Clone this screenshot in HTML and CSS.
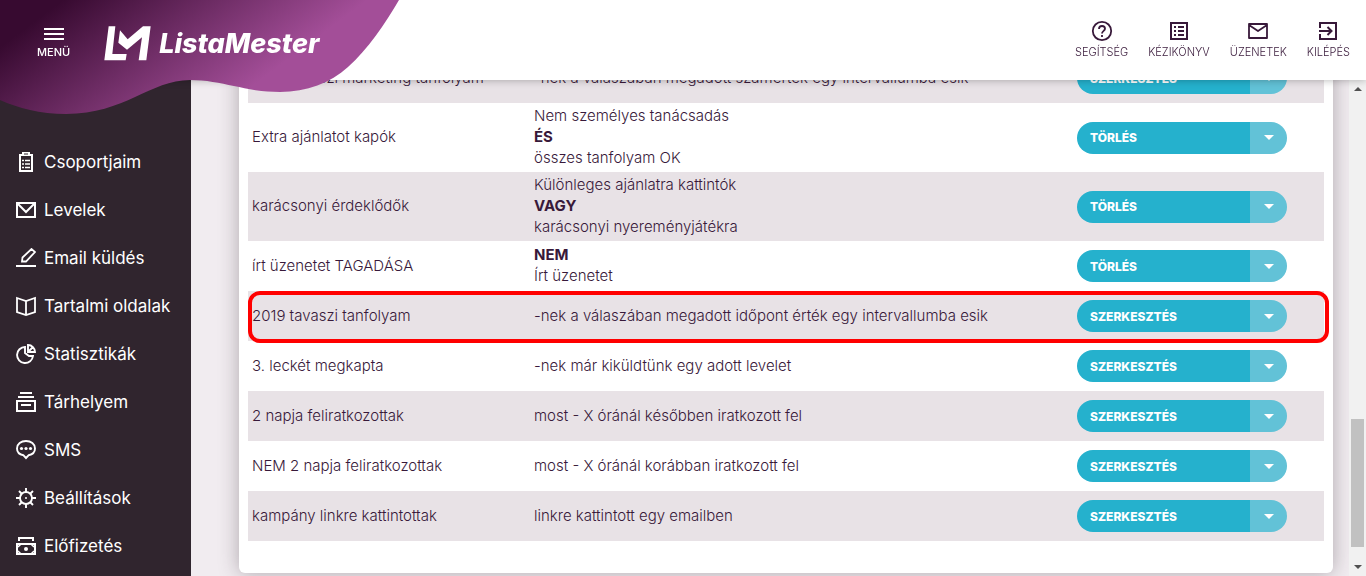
FILE: index.html
```html
<!DOCTYPE html>
<html lang="hu">
<head>
    <meta charset="UTF-8">
    <meta name="viewport" content="width=device-width, initial-scale=1.0">
    <title>ListaMester</title>
    <link rel="stylesheet" href="styles.css">
</head>
<body>
    <header class="header">
        <svg class="blob" width="400" height="115" viewBox="0 0 400 115" aria-hidden="true">
            <defs>
                <linearGradient id="blobFill" gradientUnits="userSpaceOnUse" x1="23" y1="30" x2="132" y2="176">
                    <stop offset="0" stop-color="#370a30"/>
                    <stop offset="1" stop-color="#a34e98"/>
                </linearGradient>
            </defs>
            <path fill="url(#blobFill)" d="M0 0H399C385 24 368 49 348 67C330 83 307 92 280 92C245 92 222 80 190 80C150 80 125 114 66 114C40 114 18 108 0 100Z"/>
        </svg>
        <div class="brand">
            <button class="menu-button" type="button">
                <svg width="20" height="14" viewBox="0 0 20 14" fill="#fff" aria-hidden="true"><path d="M0 1h20v2H0zM0 6h20v2H0zM0 11h20v2H0z"/></svg>
                <span>MENÜ</span>
            </button>
            <a class="logo" href="#">
                <svg width="47" height="35" viewBox="0 0 141 105" fill="#fff" aria-hidden="true">
                    <path d="M14 1H34L25 84H68L65 103H1Z"/>
                    <path d="M48 13L71 40L117 1H140L127 103H104L114 34L69 71L43 50Z"/>
                </svg>
                <span>ListaMester</span>
            </a>
        </div>
        <nav class="top-nav">
            <a href="#">
                <svg width="24" height="24" viewBox="0 0 24 24" fill="none" stroke="#38193a" stroke-width="1.8"><circle cx="12" cy="12" r="9.2"/><path d="M9 10c0-1.8 1.200-3 3-3s3 1.200 3 2.800c0 2-3 2.200-3 4.700M12 16v2"/></svg>
                <span>SEGÍTSÉG</span>
            </a>
            <a href="#">
                <svg width="24" height="24" viewBox="0 0 24 24" fill="none" stroke="#38193a" stroke-width="2"><path d="M4 4h16v16H4zM7 8h2M7 12h2M7 16h2M11 8h6M11 12h6M11 16h6"/></svg>
                <span>KÉZIKÖNYV</span>
            </a>
            <a href="#">
                <svg width="24" height="24" viewBox="0 0 24 24" fill="none" stroke="#38193a" stroke-width="1.8" stroke-linejoin="round"><path d="M3 5h18v14H3zM3 6l9 6 9-6"/></svg>
                <span>ÜZENETEK</span>
            </a>
            <a href="#">
                <svg width="24" height="24" viewBox="0 0 24 24" fill="none" stroke="#38193a" stroke-width="2"><path d="M4 9V4h16v16H4v-5M3 12h12M11.500 8l4 4-4 4"/></svg>
                <span>KILÉPÉS</span>
            </a>
        </nav>
    </header>

    <div class="layout">
        <nav class="sidebar">
            <a href="#">
                <svg width="20" height="20" viewBox="0 0 20 20" fill="none" stroke="#fff" stroke-width="2"><path d="M4 3h12v16H4z"/><path d="M6 0h8v4H6z" fill="#fff" stroke="none"/><path d="M8 2h4" stroke="#30252e" stroke-width="1"/><path d="M6 8.500h2M9 8.500h5M6 12h2M9 12h5M6 15.500h2M9 15.500h5" stroke-width="1.500"/></svg>
                Csoportjaim
            </a>
            <a href="#">
                <svg width="20" height="20" viewBox="0 0 20 20" fill="none" stroke="#fff" stroke-width="2"><path d="M1 3h18v14H1zM2 4l8 8 8-8"/></svg>
                Levelek
            </a>
            <a href="#">
                <svg width="20" height="20" viewBox="0 0 20 20" fill="none" stroke="#fff" stroke-width="1.800"><path d="M0 18h20M6 13.500l.5-4L15.500 1 19 4l-9 9.500z"/></svg>
                Email küldés
            </a>
            <a href="#">
                <svg width="20" height="20" viewBox="0 0 20 20" fill="none" stroke="#fff" stroke-width="1.800"><path d="M1 2l9 3 9-3v14l-9 3-9-3zM10 5v14"/></svg>
                Tartalmi oldalak
            </a>
            <a href="#">
                <svg width="20" height="20" viewBox="0 0 20 20" fill="none" stroke="#fff" stroke-width="1.900"><path d="M9 3a8 8 0 1 0 8 9H13L9 9zM12 1v7h7a7 7 0 0 0-7-7zM12.500 7.500L17 3"/></svg>
                Statisztikák
            </a>
            <a href="#">
                <svg width="20" height="20" viewBox="0 0 20 20" fill="none" stroke="#fff" stroke-width="2"><path d="M4 1h12M2 5h16M1 9h18v10H1zM5 13h10"/></svg>
                Tárhelyem
            </a>
            <a href="#">
                <svg width="20" height="20" viewBox="0 0 20 20" fill="none" stroke="#fff" stroke-width="1.900"><path d="M7.500 15.300C3.500 14.500 1 12 1 8.500 1 4 5 1 10 1s9 3 9 7.500c0 3.500-2.500 6-6.500 6.800L10 18z"/><g fill="#fff" stroke="none"><circle cx="5.500" cy="8.500" r="1.600"/><circle cx="10" cy="8.500" r="1.600"/><circle cx="14.500" cy="8.500" r="1.600"/></g></svg>
                SMS
            </a>
            <a href="#">
                <svg width="20" height="20" viewBox="0 0 20 20" fill="none" stroke="#fff" stroke-width="1.900"><circle cx="10" cy="10" r="6"/><path d="M10 0v4M10 16v4M0 10h4M16 10h4M3 3l3 3M14 14l3 3M3 17l3-3M14 6l3-3"/><circle cx="10" cy="10" r="1" fill="#fff" stroke="none"/></svg>
                Beállítások
            </a>
            <a href="#">
                <svg width="20" height="20" viewBox="0 0 20 20" fill="none" stroke="#fff" stroke-width="2"><path d="M3 5V2h14v3M1 8h18v10H1z"/><path d="M2 11l3-3M18 11l-3-3M2 15l3 3M18 15l-3 3" stroke-width="1.500"/><circle cx="10" cy="13" r="2" fill="#fff" stroke="none"/></svg>
                Előfizetés
            </a>
        </nav>

        <main class="content">
            <div class="card">
                <table class="filters">
                    <colgroup>
                        <col class="col-name">
                        <col class="col-rule">
                        <col class="col-action">
                    </colgroup>
                    <tbody>
                        <tr>
                            <td>2019 tavaszi marketing tanfolyam</td>
                            <td>-nek a válaszában megadott számérték egy intervallumba esik</td>
                            <td><div class="split"><button type="button" class="action">SZERKESZTÉS</button><button type="button" class="toggle" aria-label="Több"></button></div></td>
                        </tr>
                        <tr>
                            <td>Extra ajánlatot kapók</td>
                            <td>Nem személyes tanácsadás<br><b>ÉS</b><br>összes tanfolyam OK</td>
                            <td><div class="split"><button type="button" class="action">TÖRLÉS</button><button type="button" class="toggle" aria-label="Több"></button></div></td>
                        </tr>
                        <tr>
                            <td>karácsonyi érdeklődők</td>
                            <td>Különleges ajánlatra kattintók<br><b>VAGY</b><br>karácsonyi nyereményjátékra</td>
                            <td><div class="split"><button type="button" class="action">TÖRLÉS</button><button type="button" class="toggle" aria-label="Több"></button></div></td>
                        </tr>
                        <tr>
                            <td>írt üzenetet TAGADÁSA</td>
                            <td><b>NEM</b><br>Írt üzenetet</td>
                            <td><div class="split"><button type="button" class="action">TÖRLÉS</button><button type="button" class="toggle" aria-label="Több"></button></div></td>
                        </tr>
                        <tr class="highlight">
                            <td>2019 tavaszi tanfolyam</td>
                            <td>-nek a válaszában megadott időpont érték egy intervallumba esik</td>
                            <td><div class="split"><button type="button" class="action">SZERKESZTÉS</button><button type="button" class="toggle" aria-label="Több"></button></div></td>
                        </tr>
                        <tr>
                            <td>3. leckét megkapta</td>
                            <td>-nek már kiküldtünk egy adott levelet</td>
                            <td><div class="split"><button type="button" class="action">SZERKESZTÉS</button><button type="button" class="toggle" aria-label="Több"></button></div></td>
                        </tr>
                        <tr>
                            <td>2 napja feliratkozottak</td>
                            <td>most - X óránál későbben iratkozott fel</td>
                            <td><div class="split"><button type="button" class="action">SZERKESZTÉS</button><button type="button" class="toggle" aria-label="Több"></button></div></td>
                        </tr>
                        <tr>
                            <td>NEM 2 napja feliratkozottak</td>
                            <td>most - X óránál korábban iratkozott fel</td>
                            <td><div class="split"><button type="button" class="action">SZERKESZTÉS</button><button type="button" class="toggle" aria-label="Több"></button></div></td>
                        </tr>
                        <tr>
                            <td>kampány linkre kattintottak</td>
                            <td>linkre kattintott egy emailben</td>
                            <td><div class="split"><button type="button" class="action">SZERKESZTÉS</button><button type="button" class="toggle" aria-label="Több"></button></div></td>
                        </tr>
                    </tbody>
                </table>
            </div>
        </main>

        <div class="scrollbar" aria-hidden="true">
            <span class="arrow-up"></span>
            <span class="thumb"></span>
            <span class="arrow-down"></span>
        </div>
    </div>
</body>
</html>
```

FILE: styles.css
```css
* {
    box-sizing: border-box;
}
body {
    margin: 0;
    font-family: Inter, "Open Sans", sans-serif;
    font-size: 15px;
    line-height: 21px;
    color: #38193a;
    background-color: #f1ecf0;
}
a {
    color: inherit;
    text-decoration: none;
}
button {
    border: none;
    padding: 0;
    font-family: inherit;
    color: #fff;
    cursor: pointer;
}

/* header */
.header {
    position: fixed;
    top: 0;
    left: 0;
    right: 0;
    z-index: 10;
    height: 80px;
    display: flex;
    justify-content: space-between;
    background-color: #fff;
    box-shadow: 0 0 8px rgba(0, 0, 0, 0.3);
}
.blob {
    position: absolute;
    top: 0;
    left: 0;
}
.brand {
    position: relative;
    display: flex;
    align-items: center;
    gap: 34px;
    padding-left: 37px;
    padding-top: 6px;
}
.menu-button {
    display: flex;
    flex-direction: column;
    align-items: center;
    gap: 4px;
    background: none;
    font-size: 11px;
    font-weight: 500;
    line-height: 14px;
}
.logo {
    display: flex;
    align-items: center;
    gap: 8px;
    color: #fff;
    font-size: 27px;
    font-weight: 800;
    font-style: italic;
}
.top-nav {
    display: flex;
    align-items: center;
    gap: 20px;
    padding-right: 16px;
}
.top-nav a {
    display: flex;
    flex-direction: column;
    align-items: center;
    font-size: 11px;
    font-weight: 300;
    line-height: 18px;
}

/* layout */
.layout {
    display: flex;
    min-height: 100vh;
}
.sidebar {
    flex: 0 0 191px;
    padding-top: 138px;
    background-color: #30252e;
}
.sidebar a {
    display: flex;
    align-items: center;
    gap: 8px;
    height: 48px;
    padding-left: 16px;
    color: #fff;
    font-size: 17px;
}
.content {
    flex: 1;
    padding: 0 16px 3px 48px;
}
.card {
    padding: 53px 9px 32px;
    background-color: #fff;
    border-radius: 6px;
    box-shadow: 0 0 20px rgba(48, 37, 46, 0.35);
}

/* table */
.filters {
    width: 100%;
    table-layout: fixed;
    border-collapse: collapse;
    font-weight: 300;
}
.col-name {
    width: 282px;
}
.col-action {
    width: 251px;
}
.filters tr:nth-child(odd) {
    background-color: #e8e2e6;
}
.filters td {
    padding: 2px 4px 4px;
    vertical-align: middle;
}
.filters td:last-child {
    padding: 9px 4px;
}
.filters b {
    font-weight: 700;
}
.highlight {
    position: relative;
}
.highlight td:first-child::after {
    content: "";
    position: absolute;
    top: 0;
    right: -5px;
    bottom: -2px;
    left: 0;
    border: 4px solid #f00;
    border-radius: 12px;
    pointer-events: none;
}

/* split button */
.split {
    display: flex;
    width: 210px;
    height: 32px;
    border-radius: 16px;
    overflow: hidden;
}
.action {
    flex: 1;
    padding-left: 13px;
    background-color: #25b1cd;
    font-size: 12px;
    font-weight: 800;
    text-align: left;
}
.toggle {
    display: flex;
    align-items: center;
    justify-content: center;
    width: 37px;
    background-color: #62c2d7;
}
.toggle::before {
    content: "";
    border: 5px solid transparent;
    border-top-color: #fff;
    border-bottom: none;
}

/* scrollbar */
.scrollbar {
    flex: 0 0 17px;
    display: flex;
    flex-direction: column;
    align-items: center;
    height: 100vh;
    padding: 87px 0 7px;
    background-color: #f1f1f1;
}
.thumb {
    width: 13px;
    height: 128px;
    margin-top: auto;
    margin-bottom: 18px;
    background-color: #c1c1c1;
}
.arrow-up,
.arrow-down {
    border: 4px solid transparent;
}
.arrow-up {
    border-top: none;
    border-bottom-color: #505050;
}
.arrow-down {
    border-bottom: none;
    border-top-color: #505050;
}
```
